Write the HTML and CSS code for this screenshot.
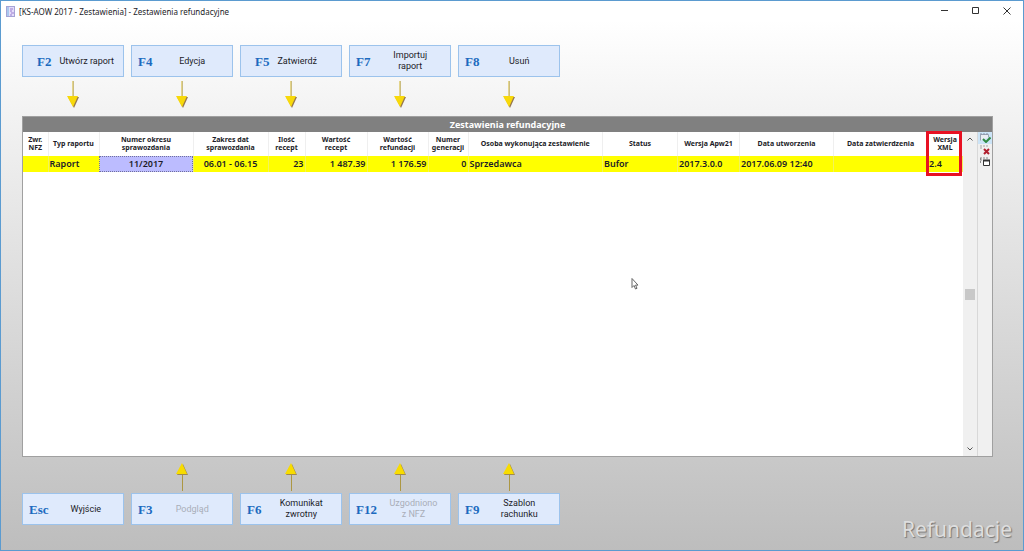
FILE: index.html
```html
<!DOCTYPE html>
<html lang="pl">
<head>
    <meta charset="UTF-8">
    <meta name="viewport" content="width=device-width, initial-scale=1.0">
    <title>[KS-AOW 2017 - Zestawienia] - Zestawienia refundacyjne</title>
    <link rel="stylesheet" href="styles.css">
</head>
<body>

    <!-- shared arrow shapes -->
    <svg class="defs" width="0" height="0" aria-hidden="true">
        <symbol id="arrow-down" viewBox="0 0 14 28">
            <path d="M6 0h2v17h-2z" fill="#e3d48c"/>
            <path d="M7.500 0v17" stroke="#cbbd80"/>
            <path d="M2 16h11l-5 11z" fill="#97774e"/>
            <path d="M1 15h11l-5 11z" fill="#f8d90a"/>
        </symbol>
        <symbol id="arrow-up" viewBox="0 0 14 28">
            <path d="M7 11h1v17h-1z" fill="#ac9743"/>
            <path d="M2 12h11l-5 -11z" fill="#a08a50"/>
            <path d="M1 11h11l-5 -11z" fill="#f8dc00"/>
        </symbol>
    </svg>

    <header class="titlebar">
        <svg class="app-icon" width="9" height="11" viewBox="0 0 9 11" aria-hidden="true">
            <rect x="0.500" y="0.500" width="8" height="10" fill="#e4dcfa" stroke="#a5a3d6"/>
            <path d="M1 1h2v9h-2z" fill="#a9c8ee"/>
            <path d="M4 3h3M4 5h2M5 7h3M4 9h2" stroke="#9a7fd0"/>
        </svg>
        <h1>[KS-AOW 2017 - Zestawienia] - Zestawienia refundacyjne</h1>
        <div class="window-buttons">
            <button type="button" aria-label="Minimalizuj"><svg width="8" height="8" viewBox="0 0 8 8"><path d="M0 3.500h7"/></svg></button>
            <button type="button" aria-label="Maksymalizuj"><svg width="8" height="8" viewBox="0 0 8 8"><path d="M0.500 0.500h6v6h-6z"/></svg></button>
            <button type="button" aria-label="Zamknij"><svg width="8" height="8" viewBox="0 0 8 8"><path d="M0.500 0.500l7 7M7.500 0.500l-7 7"/></svg></button>
        </div>
    </header>

    <main>
        <div class="toolbar toolbar-top">
            <div class="action">
                <button type="button" class="key-btn short"><b>F2</b><span>Utwórz raport</span></button>
                <svg class="arrow"><use href="#arrow-down"/></svg>
            </div>
            <div class="action">
                <button type="button" class="key-btn"><b>F4</b><span>Edycja</span></button>
                <svg class="arrow"><use href="#arrow-down"/></svg>
            </div>
            <div class="action">
                <button type="button" class="key-btn short"><b>F5</b><span>Zatwierdź</span></button>
                <svg class="arrow"><use href="#arrow-down"/></svg>
            </div>
            <div class="action">
                <button type="button" class="key-btn"><b>F7</b><span>Importuj<br>raport</span></button>
                <svg class="arrow"><use href="#arrow-down"/></svg>
            </div>
            <div class="action">
                <button type="button" class="key-btn"><b>F8</b><span>Usuń</span></button>
                <svg class="arrow"><use href="#arrow-down"/></svg>
            </div>
        </div>

        <section class="panel">
            <h2>Zestawienia refundacyjne</h2>
            <div class="panel-body">
                <div class="grid">
                    <table>
                        <colgroup>
                            <col class="w-zwr"><col class="w-typ"><col class="w-okres"><col class="w-zakres">
                            <col class="w-ilosc"><col class="w-recept"><col class="w-refund"><col class="w-numer">
                            <col><col class="w-status"><col class="w-apw"><col class="w-data">
                            <col class="w-data"><col class="w-xml">
                        </colgroup>
                        <thead>
                            <tr>
                                <th>Zwr.<br>NFZ</th>
                                <th>Typ raportu</th>
                                <th>Numer okresu<br>sprawozdania</th>
                                <th>Zakres dat<br>sprawozdania</th>
                                <th>Ilość<br>recept</th>
                                <th>Wartość<br>recept</th>
                                <th>Wartość<br>refundacji</th>
                                <th>Numer<br>generacji</th>
                                <th>Osoba wykonująca zestawienie</th>
                                <th>Status</th>
                                <th>Wersja Apw21</th>
                                <th>Data utworzenia</th>
                                <th>Data zatwierdzenia</th>
                                <th class="marked">Wersja<br>XML</th>
                            </tr>
                        </thead>
                        <tbody>
                            <tr>
                                <td></td>
                                <td>Raport</td>
                                <td class="selected">11/2017</td>
                                <td class="center">06.01 - 06.15</td>
                                <td class="num">23</td>
                                <td class="num">1 487.39</td>
                                <td class="num">1 176.59</td>
                                <td class="num">0</td>
                                <td>Sprzedawca</td>
                                <td>Bufor</td>
                                <td>2017.3.0.0</td>
                                <td>2017.06.09 12:40</td>
                                <td></td>
                                <td>2.4</td>
                            </tr>
                        </tbody>
                    </table>
                    <svg class="cursor" width="8" height="12" viewBox="0 0 8 12" aria-hidden="true">
                        <path d="M1 0.500v9l2 -2l1.500 3.500l1.500 -0.700l-1.500 -3.200h2.500z" fill="#fff" stroke="#666"/>
                    </svg>
                </div>
                <div class="scrollbar">
                    <svg width="6" height="4" viewBox="0 0 6 4"><path d="M0.500 3.500l2.500 -2.500l2.500 2.500"/></svg>
                    <div class="thumb"></div>
                    <svg width="6" height="4" viewBox="0 0 6 4"><path d="M0.500 0.500l2.500 2.500l2.500 -2.500"/></svg>
                </div>
                <div class="side-tools">
                    <button type="button" class="active" aria-label="Zaznacz"><svg width="11" height="10" viewBox="0 0 11 10">
                        <path d="M0.500 7.500v-6h8v3" fill="#e9edf3" stroke="#9aa4b4"/><path d="M0 1h9" stroke="#8791a5" stroke-dasharray="2 1"/>
                        <path d="M3 6l3 3l4.500 -4.500" fill="none" stroke="#2f8a43" stroke-width="2"/>
                    </svg></button>
                    <button type="button" aria-label="Odznacz"><svg width="11" height="10" viewBox="0 0 11 10">
                        <path d="M0 1h9M0 3h3" stroke="#a5a5a5" stroke-dasharray="2 1"/>
                        <path d="M4 4l5 5M9 4l-5 5" stroke="#b01f2e" stroke-width="2"/>
                    </svg></button>
                    <button type="button" aria-label="Odwróć zaznaczenie"><svg width="11" height="10" viewBox="0 0 11 10">
                        <path d="M0 1h9M0 3h3M0.500 1v5" fill="none" stroke="#8a8a8a" stroke-dasharray="2 1"/>
                        <path d="M3.500 3.500h6v5h-6z" fill="#fff" stroke="#333"/><path d="M3 3.500h7" stroke="#333" stroke-width="2"/>
                    </svg></button>
                </div>
            </div>
        </section>

        <div class="toolbar toolbar-bottom">
            <div class="action">
                <button type="button" class="key-btn"><b>Esc</b><span>Wyjście</span></button>
            </div>
            <div class="action">
                <svg class="arrow"><use href="#arrow-up"/></svg>
                <button type="button" class="key-btn" disabled><b>F3</b><span>Podgląd</span></button>
            </div>
            <div class="action">
                <svg class="arrow"><use href="#arrow-up"/></svg>
                <button type="button" class="key-btn"><b>F6</b><span>Komunikat<br>zwrotny</span></button>
            </div>
            <div class="action">
                <svg class="arrow"><use href="#arrow-up"/></svg>
                <button type="button" class="key-btn" disabled><b>F12</b><span>Uzgodniono<br>z NFZ</span></button>
            </div>
            <div class="action">
                <svg class="arrow"><use href="#arrow-up"/></svg>
                <button type="button" class="key-btn"><b>F9</b><span>Szablon<br>rachunku</span></button>
            </div>
            <div class="module-name">Refundacje</div>
        </div>
    </main>

</body>
</html>
```
FILE: styles.css
```css
* {
    box-sizing: border-box;
}

body {
    margin: 0;
    min-height: 100vh;
    display: flex;
    flex-direction: column;
    border: 1px solid #5b9bd0;
    background: linear-gradient(#ffffff 20px, #f3f3f3 20%, #bdbdbd);
    font-family: "Noto Sans", "Open Sans", sans-serif;
    color: #1c1c28;
}

.defs {
    position: absolute;
}

button {
    font-family: Roboto, "Noto Sans", sans-serif;
    cursor: pointer;
}

.titlebar {
    display: flex;
    align-items: center;
    height: 20px;
    padding: 0 1px 0 5px;
    background: #fff;
}

.titlebar h1 {
    margin: 0 auto 0 4px;
    font-size: 8px;
    font-weight: normal;
}

.window-buttons {
    display: flex;
}

.window-buttons button {
    width: 31px;
    height: 18px;
    padding: 0;
    border: none;
    background: none;
}

.window-buttons svg {
    display: block;
    margin: 0 auto;
    fill: none;
    stroke: #333;
}

main {
    flex: 1;
    display: flex;
    flex-direction: column;
    padding: 24px 30px 25px 21px;
}

/* function key buttons */
.toolbar {
    display: flex;
    gap: 7px;
}

.toolbar-top {
    margin-bottom: 7px;
}

.toolbar-bottom {
    margin-top: 6px;
    align-items: flex-end;
}

.action {
    display: flex;
    flex-direction: column;
    align-items: center;
    gap: 4px;
}

.toolbar-bottom .action {
    gap: 2px;
}

.arrow {
    width: 14px;
    height: 28px;
}

.key-btn {
    display: flex;
    align-items: center;
    width: 102px;
    height: 32px;
    padding: 0 0 0 6px;
    border: 1px solid #9cc3ec;
    background: #dfeafc;
    color: #1c1c28;
    font-size: 9px;
    line-height: 11px;
}

.key-btn b {
    font-family: "Liberation Serif", "Times New Roman", serif;
    font-size: 13px;
    color: #1c6abf;
}

.key-btn span {
    flex: 1;
    text-align: center;
}

.key-btn.short {
    padding-left: 14px;
}

.key-btn.short span {
    margin-left: 8px;
    text-align: left;
}

.key-btn:disabled span {
    color: #a9aeb8;
}

/* report table */
.panel {
    flex: 1;
    display: flex;
    flex-direction: column;
    border: 1px solid #a0a0a0;
    background: #fff;
}

.panel h2 {
    margin: 0;
    background: #808080;
    color: #fff;
    font-size: 9px;
    line-height: 15px;
    text-align: center;
}

.panel-body {
    flex: 1;
    display: flex;
}

.grid {
    flex: 1;
    position: relative;
}

table {
    width: 100%;
    table-layout: fixed;
    border-collapse: collapse;
}

.w-zwr { width: 25px; }
.w-typ { width: 51px; }
.w-okres { width: 94px; }
.w-zakres { width: 75px; }
.w-ilosc { width: 37px; }
.w-recept { width: 62px; }
.w-refund { width: 61px; }
.w-numer { width: 40px; }
.w-status { width: 75px; }
.w-apw { width: 62px; }
.w-data { width: 94px; }
.w-xml { width: 35px; }

th {
    position: relative;
    height: 24px;
    padding: 0;
    border-right: 1px solid #efefef;
    font-size: 7px;
    line-height: 8px;
    white-space: nowrap;
}

td {
    height: 16px;
    padding: 0 1px;
    background: #ffff00;
    border-right: 1px solid #f3f35a;
    font-size: 9px;
    font-weight: 600;
    line-height: 14px;
    white-space: nowrap;
}

.num {
    text-align: right;
}

.center {
    text-align: center;
}

.selected {
    background: #bcbcff;
    outline: 1px dotted #70709c;
    outline-offset: -1px;
    text-align: center;
}

.marked::after {
    content: "";
    box-sizing: border-box;
    position: absolute;
    top: -1px;
    left: -2px;
    right: 0;
    height: 45px;
    border: 3px solid #e81123;
}

.cursor {
    position: absolute;
    left: 608px;
    top: 146px;
}

.scrollbar {
    display: flex;
    flex-direction: column;
    align-items: center;
    justify-content: space-between;
    width: 14px;
    padding: 5px 0;
    background: #f0f0f0;
}

.scrollbar svg {
    fill: none;
    stroke: #555;
}

.thumb {
    width: 10px;
    height: 11px;
    background: #c8c8c8;
}

.side-tools {
    width: 15px;
    border-left: 1px solid #d8d8d8;
    background: #f0f0f0;
}

.side-tools button {
    display: block;
    width: 14px;
    height: 12px;
    padding: 1px 2px;
    border: none;
    background: none;
}

.side-tools button.active {
    background: #cce4f7;
}

.side-tools svg {
    display: block;
}

.module-name {
    margin-left: auto;
    margin-right: -19px;
    margin-bottom: -19px;
    color: #dedede;
    font-size: 21px;
    line-height: 30px;
    text-shadow: 1px 1px 1px #777;
}
```
